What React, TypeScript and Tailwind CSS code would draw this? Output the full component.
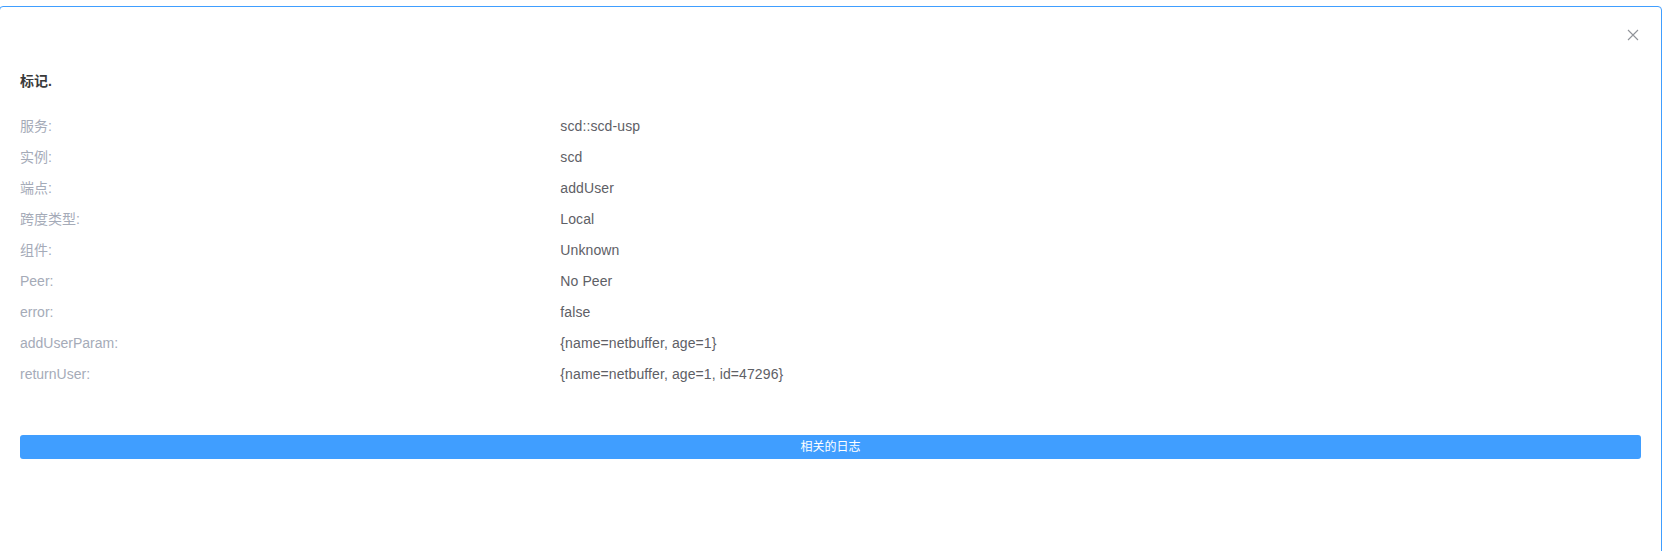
import React from "react";

const rows: [string, string][] = [
  ["服务:", "scd::scd-usp"],
  ["实例:", "scd"],
  ["端点:", "addUser"],
  ["跨度类型:", "Local"],
  ["组件:", "Unknown"],
  ["Peer:", "No Peer"],
  ["error:", "false"],
  ["addUserParam:", "{name=netbuffer, age=1}"],
  ["returnUser:", "{name=netbuffer, age=1, id=47296}"],
];

export default function App() {
  return (
    <div
      className="w-[1663px] h-[551px] overflow-hidden bg-white"
      style={{ fontFamily: '"Liberation Sans", "Noto Sans CJK SC", sans-serif' }}
    >
      <div className="ml-[-1px] mt-[6px] w-[1663px] h-[600px] border border-[#409eff] rounded-[4px] bg-white">
        <div className="flex justify-end pt-[22px] pr-[22px]">
          <svg width="12" height="12" viewBox="0 0 12 12" className="block">
            <path d="M1 1 L11 11 M11 1 L1 11" stroke="#909399" strokeWidth="1.1" fill="none" />
          </svg>
        </div>
        <div className="px-[20px]">
          <div className="mt-[30px] text-[14px] leading-[20px] font-bold text-[#3a3a3a]">标记.</div>
          <div className="mt-[20px]">
            {rows.map(([k, v]) => (
              <div key={k} className="grid grid-cols-3 h-[31px] text-[14px] leading-[31px]">
                <div className="text-[#a5abb8]">{k}</div>
                <div className="col-span-2 text-[#5e6066] tracking-[0.1px]">{v}</div>
              </div>
            ))}
          </div>
          <button className="mt-[45px] w-full h-[24px] rounded-[3px] bg-[#409eff] text-white text-[12px] leading-[24px] text-center">
            相关的日志
          </button>
        </div>
      </div>
    </div>
  );
}
